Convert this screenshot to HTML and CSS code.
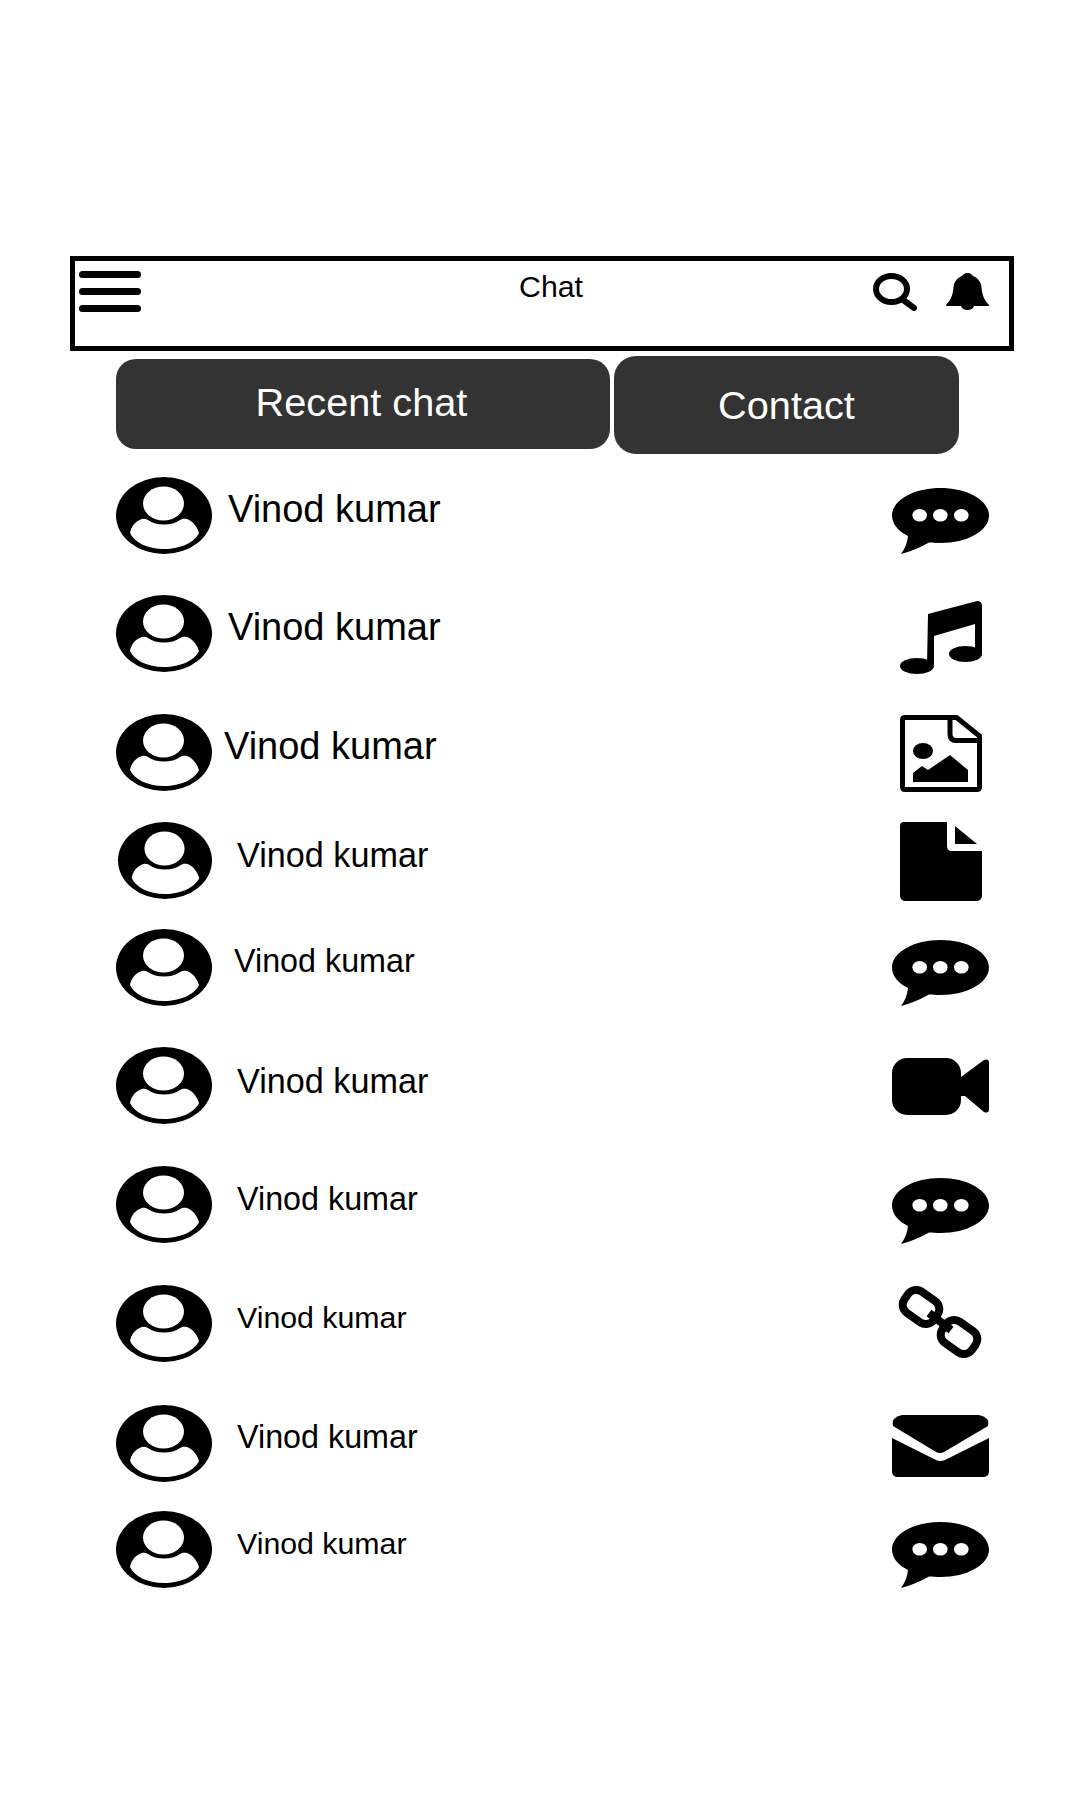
FILE: index.html
```html
<!DOCTYPE html>
<html lang="en">
<head>
<meta charset="utf-8">
<title>Chat</title>
<link rel="stylesheet" href="styles.css">
</head>
<body>
<svg class="defs" width="0" height="0" aria-hidden="true">
  <symbol id="avatar" viewBox="0 0 96 77" preserveAspectRatio="none">
    <ellipse cx="48" cy="38.5" rx="48" ry="38.5" fill="#000"/>
    <ellipse cx="47.5" cy="26.500" rx="20.500" ry="17" fill="#fff"/>
    <path fill="#fff" d="M14 56C15 50 19 44 26 42C28 41.500 30 42 32 43C36 46 42 47.500 48 47.500C54 47.500 60 46 64 43C66 42 68 41.500 71 42C77 44 81 50 83 56C79 65 65 72 48 72C31 72 18 65 14 56Z"/>
  </symbol>
  <symbol id="chat" viewBox="0 0 97 66">
    <path fill="#000" d="M48.500 0C75 0 97 12 97 27.500C97 43 75 55 48.500 55C44 55 40 54.800 37 54.500Q24 62 9 66Q15 58 16 48C6 43 0 36 0 27.500C0 12 22 0 48.500 0Z"/>
    <ellipse cx="27.7" cy="27.3" rx="7.3" ry="6.3" fill="#fff"/>
    <ellipse cx="48.3" cy="27.3" rx="7.3" ry="6.3" fill="#fff"/>
    <ellipse cx="69.3" cy="27.3" rx="7.3" ry="6.3" fill="#fff"/>
  </symbol>
  <symbol id="music" viewBox="0 0 82 73">
    <path fill="#000" d="M28 13L77 0Q82 0 82 5V54H75V23L34 35V64H27Z"/>
    <ellipse cx="65.500" cy="53" rx="16.500" ry="8" fill="#000"/>
    <ellipse cx="17" cy="65" rx="17" ry="8" fill="#000"/>
  </symbol>
  <symbol id="image" viewBox="0 0 82 77">
    <path fill="none" stroke="#000" stroke-width="5" stroke-linejoin="round" d="M5 2.500H56.500L79.500 21V72Q79.500 74.500 77 74.500H5Q2.500 74.500 2.500 72V5Q2.500 2.500 5 2.500Z"/>
    <path fill="none" stroke="#000" stroke-width="5" d="M50 3V19Q50 25.500 56 25.500H80"/>
    <ellipse cx="23" cy="36" rx="10" ry="8" fill="#000"/>
    <path fill="#000" d="M13 67V58L22 51L28 55L50 40L68 55V67Z"/>
  </symbol>
  <symbol id="file" viewBox="0 0 82 79">
    <path fill="#000" d="M4 0H47V24Q47 29 52 29H82V73Q82 79 76 79H6Q0 79 0 73V4Q0 0 4 0Z"/>
    <path fill="#000" d="M55 4L77 22H55Z"/>
  </symbol>
  <symbol id="video" viewBox="0 0 97 57">
    <rect width="69" height="57" rx="15" fill="#000"/>
    <path fill="#000" d="M69 19L92 2Q97 0 97 5V51Q97 56 92 54L73 38H69Z"/>
  </symbol>
  <symbol id="link" viewBox="0 0 87 72">
    <g fill="none" stroke="#000" stroke-width="8">
      <rect x="6" y="8" width="36" height="26" rx="10" transform="rotate(35 24 21)"/>
      <rect x="44" y="38" width="36" height="26" rx="10" transform="rotate(35 62 51)"/>
      <path stroke-width="8" d="M32 27L54 44"/>
    </g>
  </symbol>
  <symbol id="mail" viewBox="0 0 97 63">
    <path fill="#000" d="M10 0H87Q92 1 95 4Q97 6 96 11L52 37Q48 39 44 37L1 11Q0 6 2 4Q5 1 10 0Z"/>
    <path fill="#000" d="M0 23L44 45Q48 47 53 45L97 23V56Q97 62 91 62H6Q0 62 0 56Z"/>
  </symbol>
</svg>

<main class="page">
  <header class="topbar">
    <div class="menu"><span></span><span></span><span></span></div>
    <h1 class="title">Chat</h1>
    <svg class="search" viewBox="0 0 44 38" width="44" height="38">
      <ellipse cx="18.500" cy="16" rx="15.500" ry="13" fill="none" stroke="#000" stroke-width="6"/>
      <path d="M29 26L41 35" stroke="#000" stroke-width="6" stroke-linecap="round"/>
    </svg>
    <svg class="bell" viewBox="0 0 43 37" width="43" height="37">
      <path fill="#000" d="M21.500 0C25 0 26 2 27 3C32 5 35 9 35.500 14C36 20 37 26 43 32V33H0V32C6 26 7 20 7.500 14C8 9 11 5 16 3C17 2 18 0 21.500 0Z"/>
      <path fill="#000" d="M15 33H28C27 36 24 37 21.500 37C19 37 16 36 15 33Z"/>
    </svg>
  </header>

  <nav class="tabs">
    <div class="tab tab-recent">Recent chat</div>
    <div class="tab tab-contact">Contact</div>
  </nav>

  <section class="list">
    <div class="row h118"><svg class="avatar"><use href="#avatar"/></svg><span class="name name-a">Vinod kumar</span><svg class="icon i-chat"><use href="#chat"/></svg></div>
    <div class="row h119"><svg class="avatar"><use href="#avatar"/></svg><span class="name name-a">Vinod kumar</span><svg class="icon i-music"><use href="#music"/></svg></div>
    <div class="row h108"><svg class="avatar"><use href="#avatar"/></svg><span class="name name-b">Vinod kumar</span><svg class="icon i-image"><use href="#image"/></svg></div>
    <div class="row h107"><svg class="avatar avatar-narrow"><use href="#avatar"/></svg><span class="name name-c">Vinod kumar</span><svg class="icon i-file"><use href="#file"/></svg></div>
    <div class="row h118"><svg class="avatar"><use href="#avatar"/></svg><span class="name name-d">Vinod kumar</span><svg class="icon i-chat"><use href="#chat"/></svg></div>
    <div class="row h119"><svg class="avatar"><use href="#avatar"/></svg><span class="name name-c name-c-low">Vinod kumar</span><svg class="icon i-video"><use href="#video"/></svg></div>
    <div class="row h119"><svg class="avatar"><use href="#avatar"/></svg><span class="name name-e name-e-low">Vinod kumar</span><svg class="icon i-chat i-chat-low"><use href="#chat"/></svg></div>
    <div class="row h120"><svg class="avatar"><use href="#avatar"/></svg><span class="name name-f">Vinod kumar</span><svg class="icon i-link"><use href="#link"/></svg></div>
    <div class="row h106"><svg class="avatar"><use href="#avatar"/></svg><span class="name name-e">Vinod kumar</span><svg class="icon i-mail"><use href="#mail"/></svg></div>
    <div class="row h107"><svg class="avatar"><use href="#avatar"/></svg><span class="name name-f">Vinod kumar</span><svg class="icon i-chat"><use href="#chat"/></svg></div>
  </section>
</main>
</body>
</html>
```

FILE: styles.css
```css
html, body {
  margin: 0;
  padding: 0;
  background: #fff;
}

body {
  min-height: 1800px;
  color: #000;
  font-family: "Liberation Sans", Arial, sans-serif;
}

.defs {
  position: absolute;
}

.page {
  padding: 256px 0 0 70px;
}

.topbar {
  box-sizing: border-box;
  display: flex;
  align-items: flex-start;
  width: 944px;
  height: 95px;
  border: 5px solid #000;
}

.menu {
  display: flex;
  flex-direction: column;
  gap: 10px;
  width: 62px;
  margin: 10px 0 0 4px;
}

.menu span {
  display: block;
  height: 7px;
  border-radius: 4px;
  background: #000;
}

.title {
  margin: 8px 0 0 378px;
  font-size: 30.3px;
  font-weight: 400;
  line-height: 36px;
}

.search {
  margin: 12px 0 0 290px;
}

.bell {
  margin: 12px 0 0 29px;
}

.tabs {
  display: flex;
  align-items: flex-start;
  gap: 4px;
  margin: 5px 0 0 46px;
}

.tab {
  display: flex;
  align-items: center;
  justify-content: center;
  box-sizing: border-box;
  background: #333;
  color: #fff;
  font-size: 39.7px;
}

.tab-recent {
  width: 494px;
  height: 90px;
  margin-top: 3px;
  padding: 0 3px 4px 0;
  border-radius: 20px;
}

.tab-contact {
  width: 345px;
  height: 98px;
  border-radius: 22px;
}

.list {
  margin: 23px 0 0 46px;
  width: 873px;
}

.row {
  display: grid;
  grid-template-columns: 96px 1fr 97px;
  align-items: start;
}

.h106 { height: 106px; }
.h107 { height: 107px; }
.h108 { height: 108px; }
.h118 { height: 118px; }
.h119 { height: 119px; }
.h120 { height: 120px; }

.avatar {
  display: block;
  width: 96px;
  height: 77px;
}

.avatar-narrow {
  width: 94px;
  margin-left: 2px;
}

.name {
  line-height: 64px;
}

.name-a { margin-left: 16px; font-size: 38px; }
.name-b { margin-left: 12px; font-size: 38px; }
.name-c { margin: 1px 0 0 25px; font-size: 34.2px; }
.name-c-low { margin-top: 2px; }
.name-d { margin-left: 22px; font-size: 32.3px; }
.name-e { margin-left: 25px; font-size: 32.3px; }
.name-e-low { margin-top: 1px; }
.name-f { margin: 1px 0 0 25px; font-size: 30.3px; }

.icon {
  display: block;
  justify-self: center;
}

.i-chat  { width: 97px; height: 66px; margin-top: 11px; }
.i-chat-low { margin-top: 12px; }
.i-music { width: 82px; height: 73px; margin-top: 6px; }
.i-image { width: 82px; height: 77px; margin-top: 1px; }
.i-file  { width: 82px; height: 79px; }
.i-video { width: 97px; height: 57px; margin-top: 11px; }
.i-link  { width: 87px; height: 72px; margin-top: 1px; }
.i-mail  { width: 97px; height: 63px; margin-top: 10px; }
```
